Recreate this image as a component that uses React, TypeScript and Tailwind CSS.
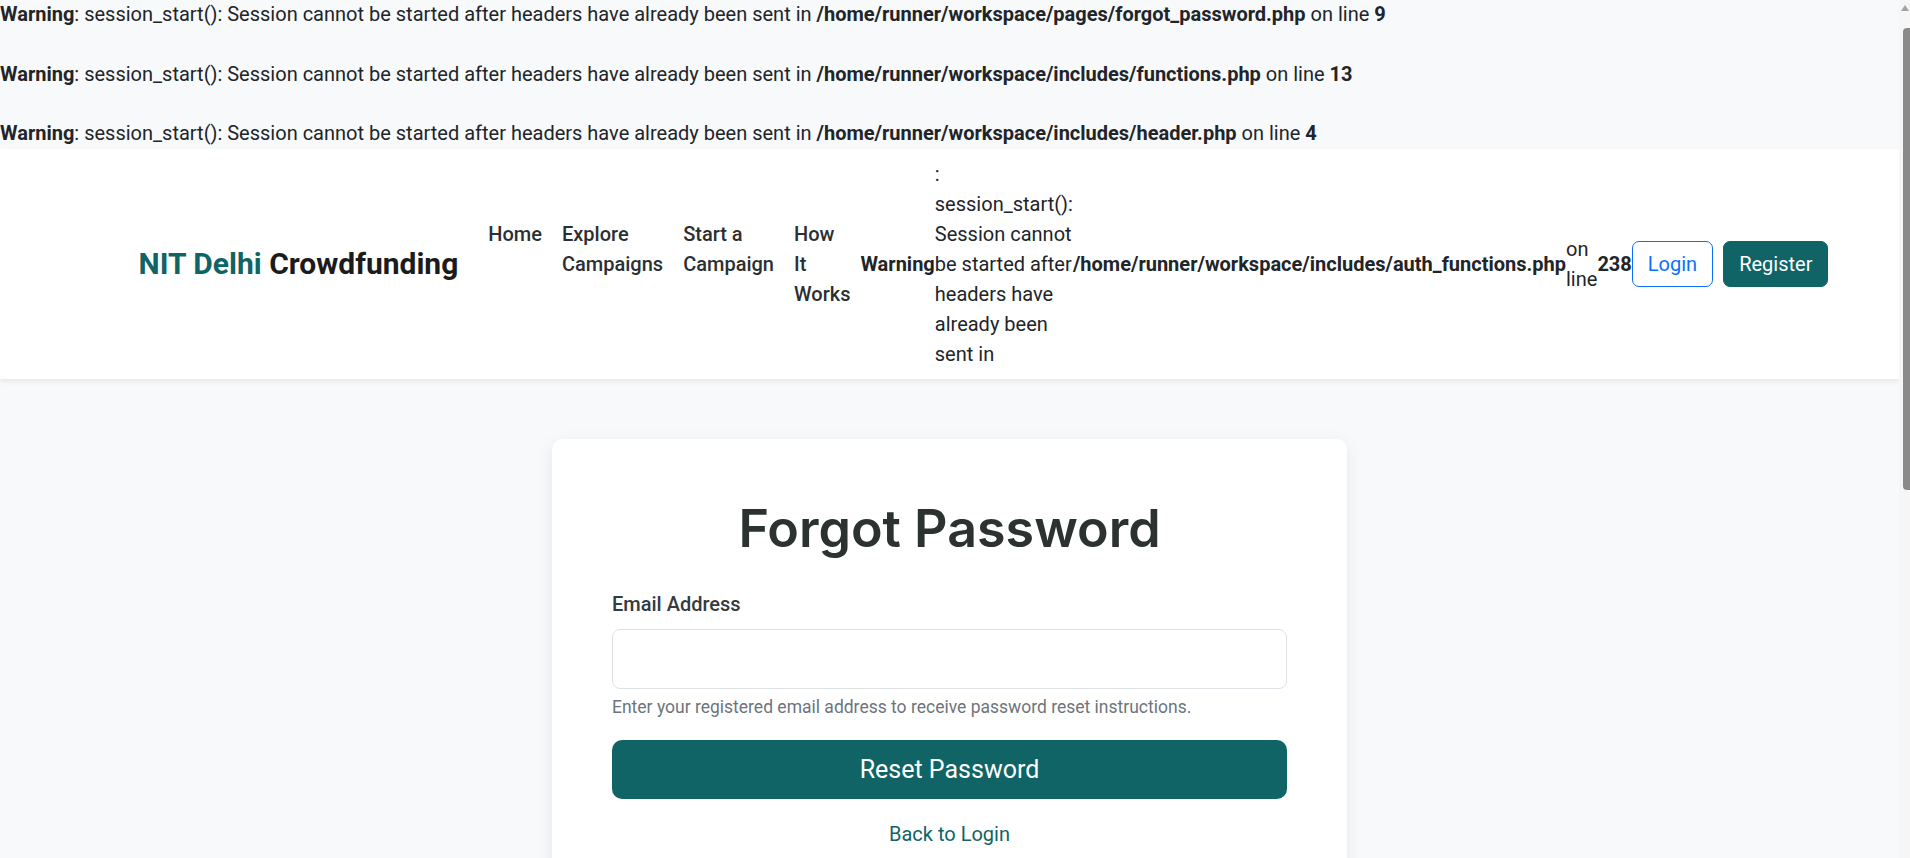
import React from "react";

function Warning({ path, line }: { path: string; line: string }) {
  return (
    <div>
      <b className="font-bold">Warning</b>: session_start(): Session cannot be started after headers have already been sent in{" "}
      <b className="font-bold">{path}</b> on line <b className="font-bold">{line}</b>
    </div>
  );
}

export default function App() {
  return (
    <div className="flex h-[858px] w-full overflow-hidden bg-[#f8f9fa] font-['Roboto',sans-serif] text-[#212529]">
      <main className="min-w-0 flex-1">
        <div className="flex flex-col gap-[29.75px] text-[20px] leading-[29.75px]">
          <Warning path="/home/runner/workspace/pages/forgot_password.php" line="9" />
          <Warning path="/home/runner/workspace/includes/functions.php" line="13" />
          <Warning path="/home/runner/workspace/includes/header.php" line="4" />
        </div>

        <header className="bg-white py-[10px] shadow-[0_2.5px_5px_rgba(0,0,0,0.075)]">
          <div className="mx-auto flex w-[1650px] items-center px-[14px] text-[20px] leading-[30px]">
            <a className="mr-[20px] shrink-0 whitespace-nowrap text-[30px] font-bold leading-[45px]">
              <span className="text-[#106466]">NIT Delhi</span> <span className="text-[#1b1b1b]">Crowdfunding</span>
            </a>
            <ul className="flex shrink-0 self-center font-medium text-[#2b2f33]">
              <li className="whitespace-nowrap px-[10px] py-[10px]">Home</li>
              <li className="whitespace-nowrap px-[10px] py-[10px]">
                Explore
                <br />
                Campaigns
              </li>
              <li className="whitespace-nowrap px-[10px] py-[10px]">
                Start a
                <br />
                Campaign
              </li>
              <li className="whitespace-nowrap px-[10px] py-[10px]">
                How
                <br />
                It
                <br />
                Works
              </li>
            </ul>
            <b className="shrink-0 font-bold">Warning</b>
            <span className="shrink-0 whitespace-nowrap">
              :
              <br />
              session_start():
              <br />
              Session cannot
              <br />
              be started after
              <br />
              headers have
              <br />
              already been
              <br />
              sent in
            </span>
            <b className="shrink-0 whitespace-nowrap font-bold">/home/runner/workspace/includes/auth_functions.php</b>
            <span className="shrink-0 whitespace-nowrap">
              on
              <br />
              line
            </span>
            <b className="shrink-0 font-bold">238</b>
            <div className="flex shrink-0 items-center">
              <button className="mr-[10px] rounded-[7px] border border-[#0d6efd] bg-white px-[15px] py-[7px] text-[20px] leading-[30px] text-[#0d6efd]">
                Login
              </button>
              <button className="rounded-[7px] border border-[#106466] bg-[#106466] px-[15px] py-[7px] text-[20px] leading-[30px] text-white">
                Register
              </button>
            </div>
          </div>
        </header>

        <section className="py-[60px]">
          <div className="mx-auto w-[795px] rounded-[10px] bg-white p-[60px] shadow-[0_5px_18px_rgba(0,0,0,0.08)]">
            <h2 className="mb-[30px] text-center font-['Inter',sans-serif] text-[52px] font-semibold leading-[60px] text-[#2b322f]">
              Forgot Password
            </h2>
            <div className="mb-[20px]">
              <label className="mb-[10px] block text-[20px] font-medium leading-[30px] text-[#343a40]">Email Address</label>
              <input
                type="email"
                className="block h-[60px] w-full rounded-[8px] border border-[#dee2e6] bg-white px-[20px] text-[25px] outline-none"
              />
              <div className="mt-[5px] text-[17.5px] leading-[26px] text-[#6c757d]">
                Enter your registered email address to receive password reset instructions.
              </div>
            </div>
            <button className="mt-[1px] block h-[59px] w-full rounded-[10px] bg-[#106466] text-[25px] leading-[37px] text-white">
              Reset Password
            </button>
            <div className="mt-[20px] text-center text-[20px] leading-[30px]">
              <a className="text-[#106466]">Back to Login</a>
            </div>
          </div>
        </section>
      </main>

      <aside className="flex w-[11px] shrink-0 flex-col items-end bg-[#f6f6f6] pt-[5px]">
        <svg width="8" height="6" viewBox="0 0 8 6" className="mr-[1px]">
          <path d="M0 6 L4 0 L8 6 Z" fill="#a3a3a3" />
        </svg>
        <div className="mt-[17px] h-[462px] w-[7px] rounded-l-[4px] bg-[#8a8a8a]" />
      </aside>
    </div>
  );
}
